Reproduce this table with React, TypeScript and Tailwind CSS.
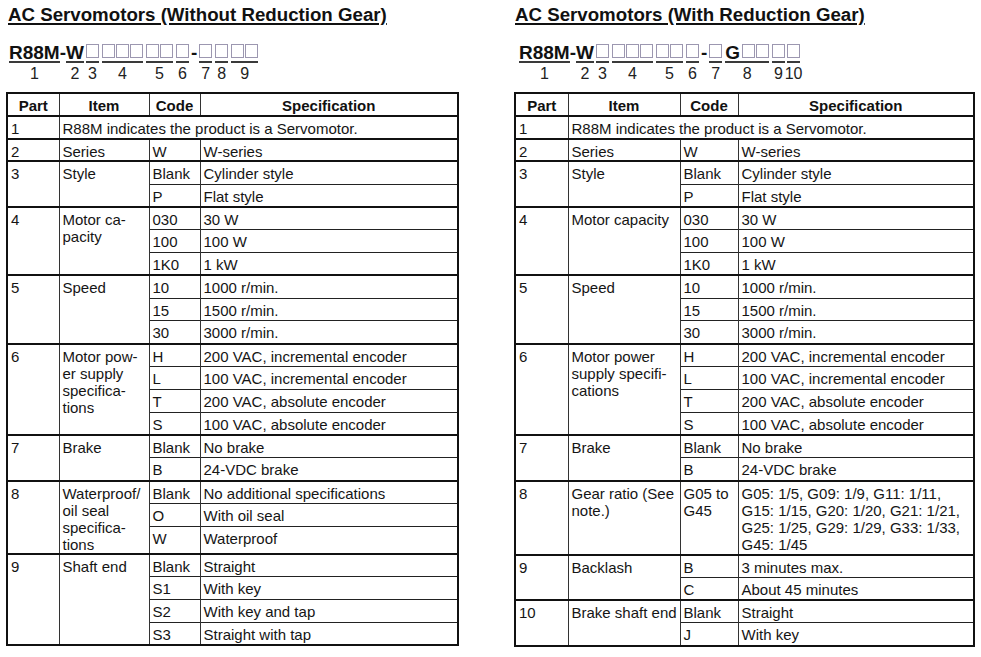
import React from "react";

type CodeRow = { code: React.ReactNode; spec: React.ReactNode };
type Group = { part: string; item: React.ReactNode; rows: CodeRow[]; lastH?: string };

const cellBase = "border-l border-r border-[#333] align-top pt-[3px] pb-0 px-[3px] whitespace-nowrap";

function SpecTable({
  width,
  cols,
  groups,
}: {
  width: string;
  cols: string[];
  groups: Group[];
}) {
  return (
    <table className={`${width} table-fixed border-collapse border-2 border-[#111] text-[15px] leading-[17px] text-[#151515]`}>
      <colgroup>
        <col className={cols[0]} />
        <col className={cols[1]} />
        <col className={cols[2]} />
        <col className={cols[3]} />
      </colgroup>
      <thead>
        <tr className="h-[22.8px]">
          {["Part", "Item", "Code", "Specification"].map((h) => (
            <th
              key={h}
              className="border border-[#333] border-b-2 border-b-[#111] font-bold text-center align-top pt-[3px] pb-0 text-[#111]"
            >
              {h}
            </th>
          ))}
        </tr>
      </thead>
      <tbody>
        <tr className="h-[22.8px] border-t-2 border-[#111]">
          <td className={cellBase}>1</td>
          <td className={cellBase} colSpan={3}>
            R88M indicates the product is a Servomotor.
          </td>
        </tr>
        {groups.map((g) =>
          g.rows.map((r, i) => (
            <tr
              key={g.part + "-" + i}
              className={`${i === g.rows.length - 1 && g.lastH ? g.lastH : "h-[22.8px]"} ${
                i === 0 ? "border-t-2 border-t-[#111]" : "border-t border-t-[#222]"
              }`}
            >
              {i === 0 && (
                <>
                  <td className={cellBase} rowSpan={g.rows.length}>
                    {g.part}
                  </td>
                  <td className={cellBase} rowSpan={g.rows.length}>
                    {g.item}
                  </td>
                </>
              )}
              <td className={cellBase}>{r.code}</td>
              <td className={cellBase}>{r.spec}</td>
            </tr>
          ))
        )}
      </tbody>
    </table>
  );
}

function Box() {
  return <span className="inline-block w-[13px] h-[14px] mt-[2px] border border-[#9c97b0]" />;
}

function Seg({ children, label, cls = "" }: { children: React.ReactNode; label: string; cls?: string }) {
  return (
    <div className={`flex flex-col ${cls}`}>
      <div className="h-[21px] leading-[21px] flex items-start gap-[1px] border-b-2 border-[#3a3a3a] text-[19px] font-bold">
        {children}
      </div>
      <div className="w-0 min-w-full flex justify-center h-[16px] mt-[3px] text-[16px] leading-[16px] font-normal text-[#222]">
        <span className="whitespace-nowrap">{label}</span>
      </div>
    </div>
  );
}

function Dash({ cls = "" }: { cls?: string }) {
  return <div className={`h-[21px] leading-[21px] text-[19px] font-bold ${cls}`}>-</div>;
}

function Boxes({ n }: { n: number }) {
  return (
    <>
      {Array.from({ length: n }).map((_, i) => (
        <Box key={i} />
      ))}
    </>
  );
}

const commonTop: Group[] = [
  { part: "2", item: "Series", rows: [{ code: "W", spec: "W-series" }] },
  {
    part: "3",
    item: "Style",
    rows: [
      { code: "Blank", spec: "Cylinder style" },
      { code: "P", spec: "Flat style" },
    ],
  },
];

const speed: Group = {
  part: "5",
  item: "Speed",
  rows: [
    { code: "10", spec: "1000 r/min." },
    { code: "15", spec: "1500 r/min." },
    { code: "30", spec: "3000 r/min." },
  ],
};

const powerRows: CodeRow[] = [
  { code: "H", spec: "200 VAC, incremental encoder" },
  { code: "L", spec: "100 VAC, incremental encoder" },
  { code: "T", spec: "200 VAC, absolute encoder" },
  { code: "S", spec: "100 VAC, absolute encoder" },
];

const capRows: CodeRow[] = [
  { code: "030", spec: "30 W" },
  { code: "100", spec: "100 W" },
  { code: "1K0", spec: "1 kW" },
];

const brake: Group = {
  part: "7",
  item: "Brake",
  rows: [
    { code: "Blank", spec: "No brake" },
    { code: "B", spec: "24-VDC brake" },
  ],
};

const leftGroups: Group[] = [
  ...commonTop,
  {
    part: "4",
    item: (
      <>
        Motor ca-
        <br />
        pacity
      </>
    ),
    rows: capRows,
  },
  speed,
  {
    part: "6",
    item: (
      <>
        Motor pow-
        <br />
        er supply
        <br />
        specifica-
        <br />
        tions
      </>
    ),
    rows: powerRows,
  },
  brake,
  {
    part: "8",
    item: (
      <>
        Waterproof/
        <br />
        oil seal
        <br />
        specifica-
        <br />
        tions
      </>
    ),
    rows: [
      { code: "Blank", spec: "No additional specifications" },
      { code: "O", spec: "With oil seal" },
      { code: "W", spec: "Waterproof" },
    ],
    lastH: "h-[28px]",
  },
  {
    part: "9",
    item: "Shaft end",
    rows: [
      { code: "Blank", spec: "Straight" },
      { code: "S1", spec: "With key" },
      { code: "S2", spec: "With key and tap" },
      { code: "S3", spec: "Straight with tap" },
    ],
  },
];

const rightGroups: Group[] = [
  ...commonTop,
  { part: "4", item: "Motor capacity", rows: capRows },
  speed,
  {
    part: "6",
    item: (
      <>
        Motor power
        <br />
        supply specifi-
        <br />
        cations
      </>
    ),
    rows: powerRows,
  },
  brake,
  {
    part: "8",
    item: (
      <>
        Gear ratio (See
        <br />
        note.)
      </>
    ),
    rows: [
      {
        code: (
          <>
            G05 to
            <br />
            G45
          </>
        ),
        spec: (
          <>
            G05: 1/5, G09: 1/9, G11: 1/11,
            <br />
            G15: 1/15, G20: 1/20, G21: 1/21,
            <br />
            G25: 1/25, G29: 1/29, G33: 1/33,
            <br />
            G45: 1/45
          </>
        ),
      },
    ],
    lastH: "h-[74px]",
  },
  {
    part: "9",
    item: "Backlash",
    rows: [
      { code: "B", spec: "3 minutes max." },
      { code: "C", spec: "About 45 minutes" },
    ],
  },
  {
    part: "10",
    item: "Brake shaft end",
    rows: [
      { code: "Blank", spec: "Straight" },
      { code: "J", spec: "With key" },
    ],
  },
];

export default function App() {
  return (
    <div className="w-[981px] h-[657px] bg-white flex gap-[57px] pl-[6px] font-['Liberation_Sans',Arial,sans-serif] text-[#111]">
      {/* Left */}
      <div className="flex flex-col w-[451px]">
        <div className="pt-[4px] pl-[2px] h-[27px] leading-[22px] text-[18.7px] font-bold underline decoration-2 underline-offset-[2px] whitespace-nowrap">
          AC Servomotors (Without Reduction Gear)
        </div>
        <div className="flex items-start mt-[15px] pl-[3px]">
          <Seg label="1">R88M</Seg>
          <Dash />
          <Seg label="2">W</Seg>
          <Seg label="3" cls="ml-[2px]">
            <Boxes n={1} />
          </Seg>
          <Seg label="4" cls="ml-[3px]">
            <Boxes n={3} />
          </Seg>
          <Seg label="5" cls="ml-[3px]">
            <Boxes n={2} />
          </Seg>
          <Seg label="6" cls="ml-[3px]">
            <Boxes n={1} />
          </Seg>
          <Dash cls="mx-[2px]" />
          <Seg label="7">
            <Boxes n={1} />
          </Seg>
          <Seg label="8" cls="ml-[3px]">
            <Boxes n={1} />
          </Seg>
          <Seg label="9" cls="ml-[3px]">
            <Boxes n={2} />
          </Seg>
        </div>
        <div className="mt-[10px]">
          <SpecTable
            width="w-[451px]"
            cols={["w-[52px]", "w-[90px]", "w-[51px]", "w-[258px]"]}
            groups={leftGroups}
          />
        </div>
      </div>
      {/* Right */}
      <div className="flex flex-col w-[459px]">
        <div className="pt-[4px] pl-[1px] h-[27px] leading-[22px] text-[18.7px] font-bold underline decoration-2 underline-offset-[2px] whitespace-nowrap">
          AC Servomotors (With Reduction Gear)
        </div>
        <div className="flex items-start mt-[15px] pl-[5px]">
          <Seg label="1">R88M</Seg>
          <Dash />
          <Seg label="2">W</Seg>
          <Seg label="3" cls="ml-[2px]">
            <Boxes n={1} />
          </Seg>
          <Seg label="4" cls="ml-[3px]">
            <Boxes n={3} />
          </Seg>
          <Seg label="5" cls="ml-[3px]">
            <Boxes n={2} />
          </Seg>
          <Seg label="6" cls="ml-[3px]">
            <Boxes n={1} />
          </Seg>
          <Dash cls="mx-[2px]" />
          <Seg label="7">
            <Boxes n={1} />
          </Seg>
          <Seg label="8" cls="ml-[3px]">
            <span className="mr-[1px]">G</span>
            <Boxes n={2} />
          </Seg>
          <Seg label="9" cls="ml-[3px]">
            <Boxes n={1} />
          </Seg>
          <Seg label="10" cls="ml-[2px]">
            <Boxes n={1} />
          </Seg>
        </div>
        <div className="mt-[10px]">
          <SpecTable
            width="w-[459px]"
            cols={["w-[53px]", "w-[112px]", "w-[58px]", "w-[236px]"]}
            groups={rightGroups}
          />
        </div>
      </div>
    </div>
  );
}
